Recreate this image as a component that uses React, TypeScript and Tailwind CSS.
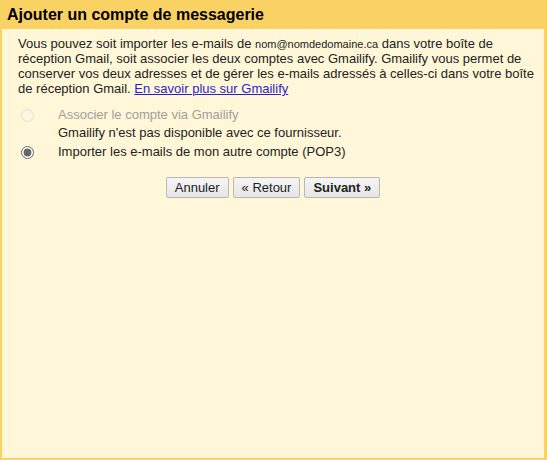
import React from 'react';

const Btn = ({ children, bold }: { children: React.ReactNode; bold?: boolean }) => (
  <button
    className={
      'h-[21px] px-[8px] border border-[#b8b8b8] rounded-[2px] bg-gradient-to-b from-[#f5f5f5] to-[#e6e6e6] text-[13px] leading-none text-[#222] ' +
      (bold ? 'font-bold' : '')
    }
  >
    {children}
  </button>
);

export default function App() {
  return (
    <div className="w-[547px] h-[460px] bg-[#fad163] pl-[2px] pr-[3px] pb-[2px] flex flex-col font-['Liberation_Sans',Arial,sans-serif]">
      <div className="h-[29px] flex items-center pl-[5px] pt-[1px]">
        <h1 className="text-[16px] font-bold text-black">Ajouter un compte de messagerie</h1>
      </div>
      <div className="flex-1 bg-[#fff7d7] pl-[16px] pr-[10px] pt-[7px] text-[13px] text-[#222]">
        <p className="leading-[15px]">
          Vous pouvez soit importer les e-mails de{' '}
          <span className="text-[11px] leading-none">nom@nomdedomaine.ca</span> dans votre boîte de réception Gmail,
          soit associer les deux comptes avec Gmailify. Gmailify vous permet de conserver vos deux
          adresses et de gérer les e-mails adressés à celles-ci dans votre boîte de réception Gmail.{' '}
          <a href="#" className="text-[#2a1fd0] underline">
            En savoir plus sur Gmailify
          </a>
        </p>
        <div className="mt-[10px] flex flex-col">
          <label className="flex items-center h-[18px]">
            <input type="radio" disabled className="w-[13px] h-[13px] ml-[3px] mr-[24px] m-0 opacity-50" />
            <span className="text-[#a0a0a0]">Associer le compte via Gmailify</span>
          </label>
          <div className="pl-[40px] h-[18px] leading-[18px]">Gmailify n'est pas disponible avec ce fournisseur.</div>
          <label className="flex items-center h-[18px] mt-[1px]">
            <input type="radio" defaultChecked name="r" className="w-[13px] h-[13px] ml-[3px] mr-[24px] m-0 accent-[#666]" />
            <span>Importer les e-mails de mon autre compte (POP3)</span>
          </label>
        </div>
        <div className="mt-[16px] flex justify-center gap-[4px] pr-[6px]">
          <Btn>Annuler</Btn>
          <Btn>« Retour</Btn>
          <Btn bold>Suivant »</Btn>
        </div>
      </div>
    </div>
  );
}
